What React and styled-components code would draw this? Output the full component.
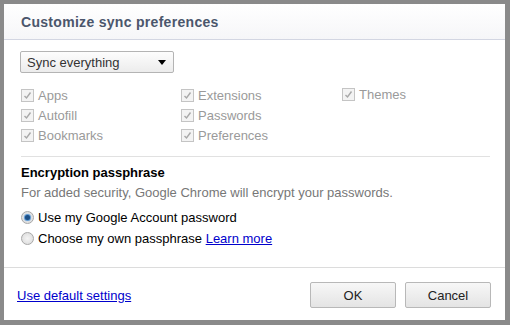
import React from 'react';
import styled, { createGlobalStyle } from 'styled-components';

const Global = createGlobalStyle`
    html, body {
        margin: 0;
        padding: 0;
        background: #8a8a8a;
    }
    body {
        font-family: "Liberation Sans", Arial, sans-serif;
        font-size: 13px;
    }
`;

const Frame = styled.div`
    width: 510px;
    height: 325px;
    box-sizing: border-box;
    padding: 4px 5px 5px 4px;
    background: #8a8a8a;
`;

const Dialog = styled.div`
    height: 316px;
    background: #fff;
    display: flex;
    flex-direction: column;
`;

const Header = styled.div`
    height: 36px;
    box-sizing: border-box;
    padding: 0 0 0 17px;
    display: flex;
    align-items: center;
    background: linear-gradient(#ffffff, #f6f6f8);
    border-bottom: 1px solid #d3d6e2;
`;

const Title = styled.h1`
    margin: 0;
    font-size: 14px;
    font-weight: bold;
    letter-spacing: 0.3px;
    color: #4b566c;
`;

const Body = styled.div`
    flex: 1;
    padding: 11px 15px 0 16px;
`;

const Select = styled.div`
    width: 154px;
    height: 22px;
    box-sizing: border-box;
    border: 1px solid #b4b4b4;
    border-radius: 2px;
    background: linear-gradient(#fdfdfd, #ececec);
    display: flex;
    align-items: center;
    justify-content: space-between;
    padding: 0 7px 0 6px;
    color: #333;
    font-size: 13px;
`;

const Arrow = styled.span`
    width: 0;
    height: 0;
    border-left: 4px solid transparent;
    border-right: 4px solid transparent;
    border-top: 5px solid #000;
`;

const Grid = styled.div`
    display: grid;
    grid-template-columns: 160px 161px 140px;
    grid-auto-rows: 20px;
    margin-top: 12px;
    padding-left: 1px;
`;

const Option = styled.label`
    display: flex;
    align-items: center;
    gap: 4px;
    color: #9a9a9a;
    font-size: 13px;
    margin-top: ${p => (p.$raise ? '-2px' : '0')};
`;

const Box = styled.span`
    width: 11px;
    height: 11px;
    border: 1px solid #c4c4c4;
    background: #f3f3f3;
    display: inline-flex;
    align-items: center;
    justify-content: center;
    flex-shrink: 0;
`;

const Rule = styled.hr`
    border: 0;
    border-top: 1px solid #e1e1e1;
    margin: 11px 0 0 1px;
`;

const Section = styled.div`
    padding-left: 1px;
`;

const Heading = styled.div`
    font-weight: bold;
    color: #000;
    font-size: 13px;
    margin-top: 8px;
    line-height: 16px;
`;

const Note = styled.div`
    color: #777;
    line-height: 16px;
    margin-top: 4px;
`;

const Radio = styled.label`
    display: flex;
    align-items: center;
    gap: 4px;
    color: #000;
    height: 20px;
    margin-top: ${p => (p.$first ? '6px' : '1px')};
`;

const Dot = styled.span`
    width: 11px;
    height: 11px;
    border-radius: 50%;
    border: 1px solid #a8a8a8;
    background: radial-gradient(circle, #f4f4f4 0%, #d8d8d8 100%);
    display: inline-flex;
    align-items: center;
    justify-content: center;
    flex-shrink: 0;

    &::after {
        content: '';
        width: 5px;
        height: 5px;
        border-radius: 50%;
        background: ${p => (p.$on ? '#1c4f86' : 'transparent')};
        box-shadow: ${p => (p.$on ? '0 0 1px 1px #4d8fcf' : 'none')};
    }
`;

const Link = styled.a`
    color: #0000cc;
    text-decoration: underline;
    cursor: pointer;
`;

const Footer = styled.div`
    height: 53px;
    box-sizing: border-box;
    border-top: 1px solid #dcdcdc;
    display: flex;
    align-items: center;
    justify-content: space-between;
    padding: 2px 14px 0 13px;
`;

const Buttons = styled.div`
    display: flex;
    gap: 9px;
`;

const Button = styled.button`
    width: 86px;
    height: 26px;
    font-family: "Liberation Sans", Arial, sans-serif;
    font-size: 13px;
    color: #222;
    border: 1px solid #b8b8b8;
    border-radius: 2px;
    background: linear-gradient(#f7f7f7, #e4e4e4);
`;

const Check = () => (
    <Box>
        <svg width="9" height="9" viewBox="0 0 9 9">
            <path d="M1.5 5 L3.5 7 L7.5 1.5" fill="none" stroke="#a8a8a8" strokeWidth="1.4" />
        </svg>
    </Box>
);

const items = [
    ['Apps', 'Extensions', 'Themes'],
    ['Autofill', 'Passwords', null],
    ['Bookmarks', 'Preferences', null],
];

export default function App() {
    return (
        <Frame>
            <Global />
            <Dialog>
                <Header>
                    <Title>Customize sync preferences</Title>
                </Header>
                <Body>
                    <Select>
                        Sync everything
                        <Arrow />
                    </Select>
                    <Grid>
                        {items.flat().map((name, i) =>
                            name ? (
                                <Option key={i} $raise={name === 'Themes'}>
                                    <Check />
                                    {name}
                                </Option>
                            ) : (
                                <span key={i} />
                            )
                        )}
                    </Grid>
                    <Rule />
                    <Section>
                        <Heading>Encryption passphrase</Heading>
                        <Note>For added security, Google Chrome will encrypt your passwords.</Note>
                        <Radio $first>
                            <Dot $on />
                            Use my Google Account password
                        </Radio>
                        <Radio>
                            <Dot />
                            <span>
                                Choose my own passphrase <Link>Learn more</Link>
                            </span>
                        </Radio>
                    </Section>
                </Body>
                <Footer>
                    <Link>Use default settings</Link>
                    <Buttons>
                        <Button>OK</Button>
                        <Button>Cancel</Button>
                    </Buttons>
                </Footer>
            </Dialog>
        </Frame>
    );
}
